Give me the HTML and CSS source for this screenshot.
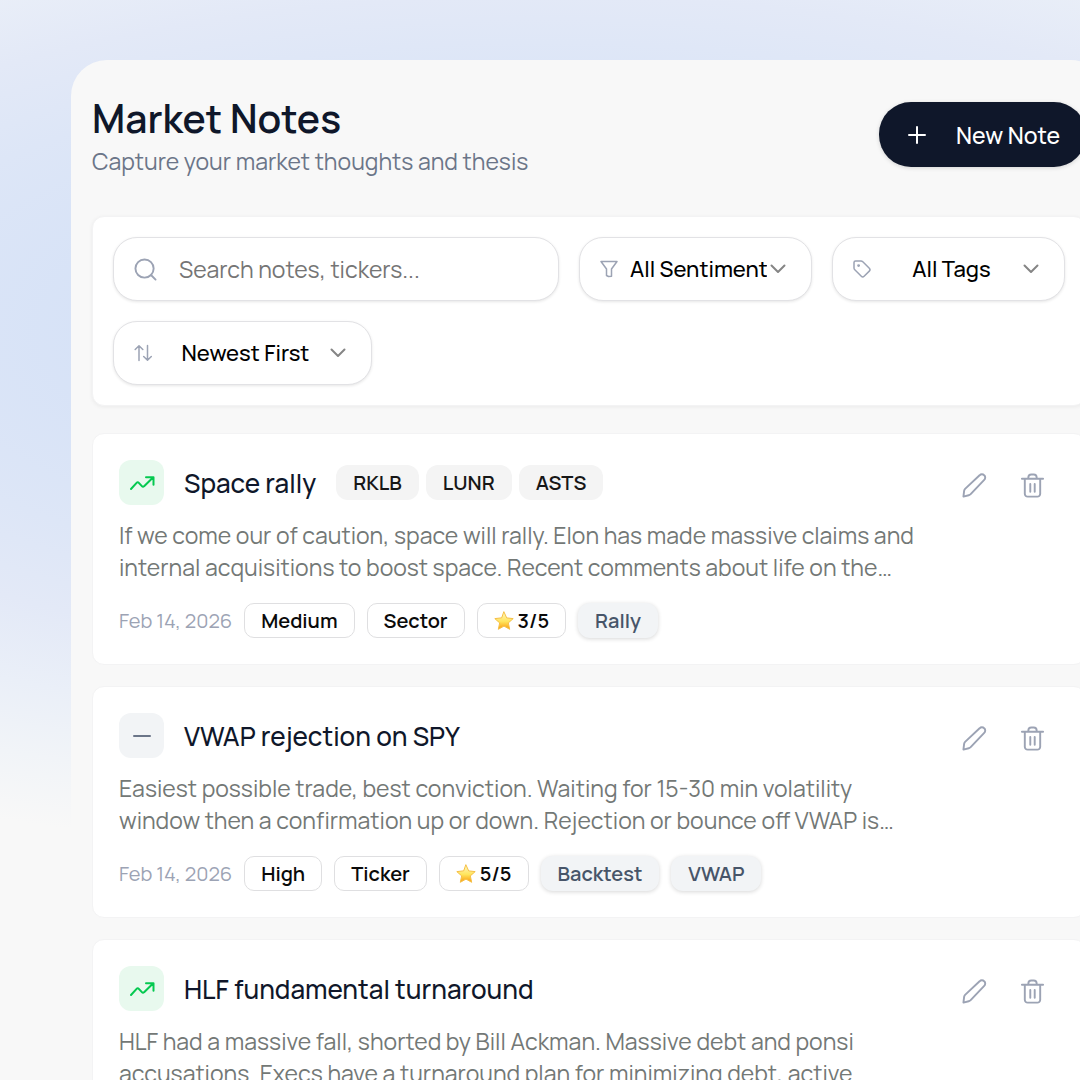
FILE: index.html
```html
<!DOCTYPE html>
<html lang="en">
<head>
  <meta charset="UTF-8" />
  <meta name="viewport" content="width=device-width, initial-scale=1.0"/>
  <title>Market Notes</title>
  <link rel="stylesheet" href="styles.css">
</head>
<body>
  <!-- shared icons -->
  <svg class="sprite" aria-hidden="true">
    <linearGradient id="gold" x1="0" y1="0" x2="0" y2="1">
      <stop offset="0" stop-color="#fff6c4"/>
      <stop offset="0.55" stop-color="#ffe55c"/>
      <stop offset="1" stop-color="#fb9a0c"/>
    </linearGradient>
    <symbol id="chevron" viewBox="0 0 16 16"><path d="M1.500 4.500L8 11l6.500-6.500"/></symbol>
    <symbol id="trend" viewBox="0 0 26 26"><path d="M2 19l5.600-6.200c.7-.8 1.500-.8 2.200 0l3.100 3.400c.7.800 1.500.8 2.200 0L24 7.500M17 7.200h7.500v7.600"/></symbol>
    <symbol id="pencil" viewBox="0 0 26 26"><path d="M1.500 24.500l.7-6c.1-.8.4-1.400 1-2L18.300 2.400a3.300 3.300 0 0 1 4.800 0 3.300 3.300 0 0 1 0 4.800L9 22c-.6.600-1.200.9-2 1.100z"/></symbol>
    <symbol id="trash" viewBox="0 0 26 26"><path d="M2 6h22M5 6v15.600a3 3 0 0 0 3 3h10a3 3 0 0 0 3-3V6M8.700 6V4.500a3 3 0 0 1 3-3h2.600a3 3 0 0 1 3 3V6M10.700 11.500v8M15.300 11.500v8"/></symbol>
    <symbol id="star" viewBox="0 0 20 20"><path d="M10 1l2.700 5.900 6.500.7-4.900 4.300 1.400 6.400L10 15.100l-5.700 3.200 1.400-6.400L.8 7.600l6.500-.7z"/></symbol>
  </svg>

  <main class="panel">
    <header class="page-header">
      <div>
        <h1>Market Notes</h1>
        <p>Capture your market thoughts and thesis</p>
      </div>
      <button class="new-note" type="button">
        <svg class="plus" viewBox="0 0 20 20"><path d="M10 2v16M2 10h16"/></svg>
        New Note
      </button>
    </header>

    <section class="filters">
      <label class="field search">
        <svg class="icon-lg" viewBox="0 0 24 24"><circle cx="11" cy="11" r="9.500"/><path d="M18 18l4.500 4.500"/></svg>
        <input type="text" placeholder="Search notes, tickers..." aria-label="Search notes">
      </label>
      <label class="field">
        <svg class="icon-sm" viewBox="0 0 18 18"><path d="M1 1.500h16l-5.500 7.500v7.200l-3 .3-2-1V9z"/></svg>
        <select aria-label="Sentiment"><option>All Sentiments</option><option>Bullish</option><option>Neutral</option><option>Bearish</option></select>
        <svg class="chevron"><use href="#chevron"/></svg>
      </label>
      <label class="field">
        <svg class="icon-sm" viewBox="0 0 18 18"><path d="M1 2.500V8c0 .8.300 1.300.8 1.800l6.500 6.500c1 1 1.800 1 2.800 0l5.200-5.200c1-1 1-1.800 0-2.800L9.800 1.800C9.300 1.300 8.800 1 8 1H2.500C1.500 1 1 1.500 1 2.500z"/><circle cx="5.600" cy="5.600" r=".7"/></svg>
        <select aria-label="Tags"><option>All Tags</option><option>Rally</option><option>Backtest</option><option>VWAP</option></select>
        <svg class="chevron"><use href="#chevron"/></svg>
      </label>
      <label class="field sort">
        <svg class="icon-sm" viewBox="0 0 18 18"><path d="M5 16.500V2M1.200 5.500L5 1.700l3.800 3.800M13.500 1.500V16M9.700 12.500l3.800 3.800 3.800-3.800"/></svg>
        <select aria-label="Sort"><option>Newest First</option><option>Oldest First</option></select>
        <svg class="chevron"><use href="#chevron"/></svg>
      </label>
    </section>

    <section class="notes">
      <article class="note">
        <div class="note-body">
          <div class="note-head">
            <span class="mood bullish"><svg><use href="#trend"/></svg></span>
            <h2>Space rally</h2>
            <div class="tickers">
              <span class="chip">RKLB</span>
              <span class="chip">LUNR</span>
              <span class="chip">ASTS</span>
            </div>
          </div>
          <p class="excerpt">If we come our of caution, space will rally. Elon has made massive claims and<br>internal acquisitions to boost space. Recent comments about life on the…</p>
          <div class="meta">
            <time datetime="2026-02-14">Feb 14, 2026</time>
            <span class="chip outline">Medium</span>
            <span class="chip outline">Sector</span>
            <span class="chip outline"><svg class="star"><use href="#star"/></svg>3/5</span>
            <span class="chip tag">Rally</span>
          </div>
        </div>
        <div class="actions">
          <button type="button" aria-label="Edit"><svg><use href="#pencil"/></svg></button>
          <button type="button" aria-label="Delete"><svg><use href="#trash"/></svg></button>
        </div>
      </article>

      <article class="note">
        <div class="note-body">
          <div class="note-head">
            <span class="mood"><svg viewBox="0 0 26 26"><path d="M5 13h16"/></svg></span>
            <h2>VWAP rejection on SPY</h2>
          </div>
          <p class="excerpt">Easiest possible trade, best conviction. Waiting for 15-30 min volatility<br>window then a confirmation up or down. Rejection or bounce off VWAP is…</p>
          <div class="meta">
            <time datetime="2026-02-14">Feb 14, 2026</time>
            <span class="chip outline">High</span>
            <span class="chip outline">Ticker</span>
            <span class="chip outline"><svg class="star"><use href="#star"/></svg>5/5</span>
            <span class="chip tag">Backtest</span>
            <span class="chip tag">VWAP</span>
          </div>
        </div>
        <div class="actions">
          <button type="button" aria-label="Edit"><svg><use href="#pencil"/></svg></button>
          <button type="button" aria-label="Delete"><svg><use href="#trash"/></svg></button>
        </div>
      </article>

      <article class="note">
        <div class="note-body">
          <div class="note-head">
            <span class="mood bullish"><svg><use href="#trend"/></svg></span>
            <h2>HLF fundamental turnaround</h2>
          </div>
          <p class="excerpt">HLF had a massive fall, shorted by Bill Ackman. Massive debt and ponsi<br>accusations. Execs have a turnaround plan for minimizing debt, active…</p>
        </div>
        <div class="actions">
          <button type="button" aria-label="Edit"><svg><use href="#pencil"/></svg></button>
          <button type="button" aria-label="Delete"><svg><use href="#trash"/></svg></button>
        </div>
      </article>
    </section>
  </main>
</body>
</html>
```
FILE: styles.css
```css
* {
  box-sizing: border-box;
}

html {
  height: 100%;
  overflow: hidden;
}

body {
  margin: 0;
  height: 100%;
  padding-top: 60px;
  overflow: hidden;
  font-family: 'Manrope', 'Inter', sans-serif;
  font-size: 23px;
  color: #0f172a;
  background: #f8f8f8 radial-gradient(1400px 530px at 50% 330px, #d6e2f7 30%, #dde6f7 50%, #e3e9f7 63%, #eaeff8 76%, #f1f4f8 88%, #f8f8f8 100%);
}

h1, h2, p {
  margin: 0;
}

svg {
  flex: none;
  fill: none;
  stroke: currentColor;
  stroke-width: 2;
  stroke-linecap: round;
  stroke-linejoin: round;
}

button, input, select {
  font: inherit;
  border: none;
  background: none;
  padding: 0;
  outline: none;
}

button {
  cursor: pointer;
}

.sprite {
  position: absolute;
  width: 0;
  height: 0;
}

/* the panel runs off the right side of the window */
.panel {
  margin: 0 -27px 0 71px;
  padding: 36px 21px;
  min-height: 100%;
  border-radius: 36px;
  background: #f8f8f8;
}

.page-header {
  display: flex;
  justify-content: space-between;
  padding-bottom: 34px;
}

.page-header h1 {
  font-size: 39px;
  font-weight: 600;
  line-height: 44px;
}

.page-header p {
  color: #6b7588;
  line-height: 42px;
}

.new-note {
  display: flex;
  align-items: center;
  gap: 29px;
  height: 65px;
  margin-top: 6px;
  padding: 0 26px 0 28px;
  border-radius: 32px;
  background: #0f172a;
  color: #fff;
  font-weight: 500;
  box-shadow: 0 1px 4px rgba(0,0,0,0.15);
}

.plus {
  width: 20px;
  height: 20px;
}

.filters {
  display: flex;
  flex-wrap: wrap;
  gap: 20px;
  padding: 20px;
  border: 1px solid #f3f3f4;
  border-radius: 12px;
  background: #fff;
  box-shadow: 0 1px 4px rgba(0,0,0,0.06);
}

.field {
  display: flex;
  align-items: center;
  width: 233px;
  height: 64px;
  padding: 0 25px 0 20px;
  border: 1px solid #e2e2e5;
  border-radius: 24px;
  background: #fff;
  color: #9ca3b4;
  box-shadow: 0 1px 3px rgba(0,0,0,0.1);
}

.field.search {
  flex: 1;
}

.field.sort {
  width: 259px;
}

.field input {
  flex: 1;
  min-width: 0;
  margin-left: 22px;
}

.field input::placeholder {
  color: #757575;
}

.field select {
  flex: 1;
  min-width: 0;
  margin: 0 3px 0 12px;
  appearance: none;
  color: #000;
  font-size: 22px;
  font-weight: 500;
  text-align: center;
  text-overflow: clip;
}

.icon-lg {
  width: 23px;
  height: 23px;
}

.icon-sm {
  width: 18px;
  height: 18px;
  stroke-width: 1.5;
}

.chevron {
  width: 16px;
  height: 16px;
  color: #858585;
}

.notes {
  display: flex;
  flex-direction: column;
  gap: 21px;
  margin-top: 27px;
}

.note {
  display: flex;
  justify-content: space-between;
  padding: 26px;
  border: 1px solid #f3f3f4;
  border-radius: 12px;
  background: #fff;
}

.note-head {
  display: flex;
  align-items: center;
  height: 45px;
}

.note-head h2 {
  margin-left: 20px;
  font-size: 26px;
  font-weight: 500;
}

.mood {
  display: grid;
  place-items: center;
  width: 45px;
  height: 45px;
  border-radius: 12px;
  background: #f2f4f6;
  color: #6b7588;
}

.mood svg {
  width: 26px;
  height: 26px;
}

.mood.bullish {
  background: #e8f9ee;
  color: #05c950;
}

.tickers {
  display: flex;
  gap: 7px;
  margin-left: 20px;
}

.chip {
  display: flex;
  align-items: center;
  height: 35px;
  padding: 0 17px;
  border-radius: 12px;
  background: #f4f4f4;
  color: #171717;
  font-size: 20px;
  font-weight: 600;
}

.chip.outline {
  padding: 0 16px;
  border: 1px solid #dfdfe1;
  border-radius: 10px;
  background: #fff;
  color: #0a0a0a;
}

.chip.tag {
  background: #f2f4f6;
  color: #475569;
  box-shadow: 0 1px 4px rgba(0,0,0,0.16);
}

.star {
  width: 20px;
  height: 20px;
  margin-right: 4px;
  fill: url(#gold);
  stroke: #f5bf45;
  stroke-width: 1;
}

.excerpt {
  margin-top: 14px;
  color: #737876;
  line-height: 32px;
  white-space: nowrap;
}

.meta {
  display: flex;
  align-items: center;
  gap: 12px;
  margin-top: 20px;
}

.meta time {
  color: #9ca3b4;
  font-size: 20px;
}

.actions {
  display: flex;
  gap: 4px;
}

.actions button {
  display: grid;
  place-items: center;
  width: 54px;
  height: 51px;
  color: #9ca3b4;
}

.actions svg {
  width: 25px;
  height: 25px;
}
```
